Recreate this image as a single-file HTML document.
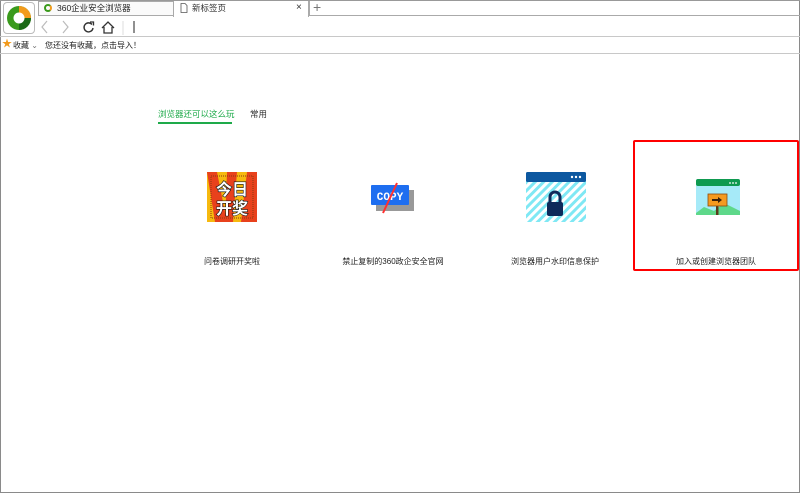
<!DOCTYPE html>
<html><head><meta charset="utf-8"><style>
*{margin:0;padding:0;box-sizing:border-box}
body{width:800px;height:493px;position:relative;background:#fff;font-family:"Liberation Sans","Noto Sans CJK SC",sans-serif;font-size:9px;color:#222;overflow:hidden}
.a{position:absolute}
.frame{left:0;top:0;width:800px;height:493px;border:1px solid #8a8a8a;border-top:none}
</style></head><body>
<div class="a frame"></div>
<div class="a" style="left:0;top:0;width:800px;height:1px;background:#999"></div>
<!-- tab strip -->
<div class="a" style="left:38;top:0"></div>
<div class="a" style="left:38px;top:1px;width:136px;height:15px;border:1px solid #aaa;background:#fafafa"></div>
<div class="a" style="left:44px;top:4px;width:8px;height:8px;border-radius:50%;border:2px solid #3a9a1c;border-right-color:#f29a1c"></div>
<div class="a" style="left:57px;top:2px;font-size:8.5px;line-height:12px">360企业安全浏览器</div>
<div class="a" style="left:173px;top:1px;width:136px;height:16px;border-left:1px solid #aaa;border-right:1px solid #aaa;background:#fff"></div>
<svg class="a" style="left:180px;top:3px" width="8" height="10"><path d="M1 .5h4l2 2v7H1z" fill="#fff" stroke="#555" stroke-width=".8"/></svg>
<div class="a" style="left:192px;top:2px;font-size:8.5px;line-height:12px;color:#333">新标签页</div>
<div class="a" style="left:296px;top:1px;font-size:10px;line-height:14px;color:#333">×</div>
<div class="a" style="left:309px;top:1px;width:491px;height:15px;border-left:1px solid #aaa;border-bottom:1px solid #aaa"></div>
<div class="a" style="left:313px;top:0px;font-size:14px;line-height:15px;color:#777">+</div>
<!-- logo -->
<div class="a" style="left:3px;top:2px;width:32px;height:32px;border:1px solid #bbb;border-radius:4px;background:#fff"></div>
<svg class="a" style="left:6px;top:5px" width="26" height="26" viewBox="0 0 26 26">
<circle cx="13" cy="13" r="12" fill="#3a9a1c"/>
<path d="M13 1A12 12 0 0 1 25 13L18 13A5 5 0 0 0 13 8Z" fill="#f29a1c"/>
<path d="M25 13A12 12 0 0 1 13 25L13 18A5 5 0 0 0 18 13Z" fill="#1c6a16"/>
<circle cx="13" cy="13" r="5.5" fill="#fff"/>
</svg>
<!-- toolbar -->
<svg class="a" style="left:38px;top:19px" width="120" height="16">
<path d="M9 2L4 8l5 6" stroke="#bbb" fill="none" stroke-width="1.2"/>
<path d="M25 2l5 6-5 6" stroke="#bbb" fill="none" stroke-width="1.2"/>
<path d="M54 5.5A4.5 4.5 0 1 0 55 9" stroke="#333" fill="none" stroke-width="1.4"/><path d="M52 3h3.5v3.5" stroke="#333" fill="none" stroke-width="1.3"/>
<path d="M64 9l6-6 6 6M66 8v6h8V8" stroke="#333" fill="none" stroke-width="1.3"/>
<path d="M85 2v14" stroke="#ddd"/>
<path d="M96 2v12" stroke="#222" stroke-width="1"/>
</svg>
<div class="a" style="left:0;top:36px;width:800px;height:1px;background:#c8c8c8"></div>
<!-- bookmarks -->
<div class="a" style="left:2px;top:38px;font-size:10px;color:#f29a1c;line-height:13px">★</div>
<div class="a" style="left:13px;top:40px;font-size:8px;line-height:11px">收藏 <span style="color:#777">⌄</span></div>
<div class="a" style="left:45px;top:40px;font-size:8px;line-height:11px">您还没有收藏，点击导入！</div>
<div class="a" style="left:0;top:53px;width:800px;height:1px;background:#c8c8c8"></div>
<!-- tabs -->
<div class="a" style="left:158px;top:108px;font-size:8.5px;color:#1eaa4a;line-height:12px">浏览器还可以这么玩</div>
<div class="a" style="left:158px;top:122px;width:74px;height:2px;background:#1eaa4a"></div>
<div class="a" style="left:250px;top:108px;font-size:8.5px;color:#333;line-height:12px">常用</div>
<!-- card 1 -->
<svg class="a" style="left:207px;top:172px" width="50" height="50" viewBox="0 0 50 50">
<rect width="50" height="50" fill="#f6b90f"/>
<path d="M0 0h10l10 50H8z M20 0h10l-4 50h-8z M40 0h10v50H34z" fill="#e8411c"/>
<rect x="4" y="4" width="42" height="42" fill="none" stroke="#8a3a10" stroke-dasharray="1 1"/>
<text x="25" y="23" text-anchor="middle" font-size="16" font-weight="bold" fill="#fff" stroke="#111" stroke-width="1.2" paint-order="stroke" font-family="Noto Sans CJK SC,sans-serif">今日</text>
<text x="25" y="42" text-anchor="middle" font-size="16" font-weight="bold" fill="#fff" stroke="#111" stroke-width="1.2" paint-order="stroke" font-family="Noto Sans CJK SC,sans-serif">开奖</text>
</svg>
<div class="a" style="left:190px;top:256px;width:84px;text-align:center;font-size:8px">问卷调研开奖啦</div>
<!-- card 2 -->
<svg class="a" style="left:370px;top:180px" width="46" height="34">
<rect x="6" y="10" width="38" height="21" fill="#999"/>
<rect x="1" y="5" width="38" height="20" rx="1" fill="#1e6ef0"/>
<text x="20" y="20" text-anchor="middle" font-size="11" font-weight="bold" fill="#fff" font-family="Liberation Mono,monospace">COPY</text>
<path d="M27 3L13 33" stroke="#ff3030" stroke-width="2"/>
</svg>
<div class="a" style="left:333px;top:256px;width:120px;text-align:center;font-size:8px">禁止复制的360政企安全官网</div>
<!-- card 3 -->
<svg class="a" style="left:526px;top:172px" width="60" height="50">
<defs><pattern id="p" width="6" height="6" patternUnits="userSpaceOnUse" patternTransform="rotate(45)"><rect width="3" height="6" fill="#7fe8f4"/></pattern></defs>
<rect y="9" width="60" height="41" fill="url(#p)"/>
<rect width="60" height="10" rx="1.5" fill="#0d58a0"/>
<circle cx="46" cy="5" r="1.2" fill="#fff"/><circle cx="50" cy="5" r="1.2" fill="#fff"/><circle cx="54" cy="5" r="1.2" fill="#fff"/>
<path d="M24 31v-6a5 5 0 0 1 10 0v6" stroke="#0d2a5a" stroke-width="3" fill="none"/>
<rect x="21" y="30" width="16" height="14" rx="2" fill="#0d2a5a"/>
</svg>
<div class="a" style="left:505px;top:256px;width:100px;text-align:center;font-size:8px">浏览器用户水印信息保护</div>
<!-- card 4 -->
<div class="a" style="left:633px;top:140px;width:166px;height:131px;border:2px solid #f00;border-radius:2px"></div>
<svg class="a" style="left:696px;top:179px" width="44" height="36">
<rect width="44" height="36" rx="2" fill="#a6eaf8"/>
<rect width="44" height="7" rx="2" fill="#0f9a50"/>
<circle cx="34" cy="4" r=".9" fill="#fff"/><circle cx="37" cy="4" r=".9" fill="#fff"/><circle cx="40" cy="4" r=".9" fill="#fff"/>
<path d="M0 34l8-6 10 4 10-8 16 8v4H0z" fill="#5ed88a"/>
<rect x="20" y="22" width="2.5" height="14" fill="#5a3a1a"/>
<rect x="12" y="15" width="19" height="12" fill="#f59a20" stroke="#8a4a10" stroke-width=".8"/>
<path d="M16 20h6v-2l4 3-4 3v-2h-6z" fill="#3a200a"/>
</svg>
<div class="a" style="left:666px;top:256px;width:100px;text-align:center;font-size:8px">加入或创建浏览器团队</div>
</body></html>
